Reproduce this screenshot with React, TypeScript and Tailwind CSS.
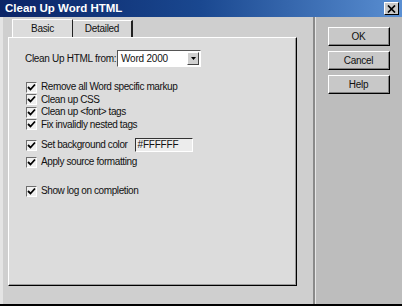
import React from 'react';

const font = { fontFamily: '"Liberation Sans", Arial, sans-serif' };

const Check: React.FC = () => (
  <span className="flex h-[11px] w-[11px] shrink-0 items-center justify-center border border-t-[#6e6e6e] border-l-[#6e6e6e] border-r-white border-b-white bg-[#f0f0f0]">
    <svg width="9" height="9" viewBox="0 0 9 9">
      <path d="M1 4 L3.5 6.5 L8 1.5" fill="none" stroke="#000" strokeWidth="1.8" />
    </svg>
  </span>
);

const Row: React.FC<{ label: string; className?: string; children?: React.ReactNode }> = ({ label, className, children }) => (
  <div className={`flex items-center ${className ?? 'h-[12.5px]'}`}>
    <Check />
    <span className="ml-[4px] whitespace-nowrap text-[10px] leading-none tracking-[-0.4px] text-[#111]">{label}</span>
    {children}
  </div>
);

const DlgButton: React.FC<{ label: string }> = ({ label }) => (
  <button className="flex h-[19px] w-[62px] items-center justify-center border border-t-white border-l-white border-r-black border-b-black bg-[#c8c8c8] text-[10px] leading-none tracking-[-0.3px] text-[#111] shadow-[inset_-1px_-1px_0_#808080]">
    {label}
  </button>
);

export default function App() {
  return (
    <div className="flex h-[306px] w-[402px] flex-col overflow-hidden border-b-2 border-black bg-[#c4c4c4]" style={font}>
      {/* Title bar */}
      <div className="flex h-[17px] shrink-0 items-center justify-between bg-gradient-to-r from-[#0b2466] via-[#1a4890] to-[#5a8fd2] pl-[5px] pr-[3px]">
        <span className="text-[11.5px] font-bold leading-none text-white">Clean Up Word HTML</span>
        <span className="flex h-[13px] w-[15px] items-center justify-center border border-t-white border-l-white border-r-black border-b-black bg-[#c8c8c8]">
          <svg width="9" height="8" viewBox="0 0 9 8">
            <path d="M1 0.5 L8 7.5 M8 0.5 L1 7.5" stroke="#000" strokeWidth="1.7" />
          </svg>
        </span>
      </div>

      <div className="flex flex-1">
        {/* Left: tabs + panel */}
        <div className="flex w-[313px] flex-col border-l-[3px] border-l-[#e4e4e4] bg-[#cfcfcf] pl-[5px] pt-[2px]">
          <div className="flex h-[18px] pl-[4px] text-[10px] leading-none tracking-[-0.3px] text-[#111]">
            <div className="flex w-[61px] items-center justify-center border-l border-t border-white border-r border-r-[#222] bg-[#dcdcdc]">
              Basic
            </div>
            <div className="mt-[1px] flex w-[60px] items-center justify-center border-t border-white border-r-2 border-r-[#222] bg-[#d6d6d6]">
              Detailed
            </div>
          </div>
          <div className="flex h-[249px] w-[289px] flex-col border border-t-white border-l-white border-r-black border-b-black bg-[#dcdcdc] pl-[16px] pt-[12px] shadow-[inset_-1px_-1px_0_#9a9a9a]">
            <div className="flex h-[17px] items-center">
              <span className="w-[92px] whitespace-nowrap text-[10px] leading-none tracking-[-0.3px] text-[#111]">Clean Up HTML from:</span>
              <div className="flex h-[17px] w-[84px] items-center justify-between border border-t-[#555] border-l-[#555] border-r-white border-b-white bg-white pl-[3px] pr-[1px]">
                <span className="text-[10px] leading-none tracking-[-0.2px] text-[#111]">Word 2000</span>
                <span className="flex h-[13px] w-[12px] items-center justify-center border border-t-white border-l-white border-r-[#444] border-b-[#444] bg-[#d0d0d0]">
                  <svg width="5" height="3" viewBox="0 0 5 3">
                    <path d="M0 0 H5 L2.5 3 Z" fill="#000" />
                  </svg>
                </span>
              </div>
            </div>

            <div className="mt-[14px] flex flex-col pl-[1px]">
              <Row label="Remove all Word specific markup" />
              <Row label="Clean up CSS" />
              <Row label="Clean up <font> tags" />
              <Row label="Fix invalidly nested tags" />
              <Row label="Set background color" className="mt-[7px] h-[14px]">
                <div className="ml-[7px] flex h-[14px] w-[58px] items-center border border-t-[#333] border-l-[#333] border-r-white border-b-white bg-[#ececec] pl-[2px] text-[10px] leading-none tracking-[-0.2px] text-[#111]">
                  #FFFFFF
                </div>
              </Row>
              <Row label="Apply source formatting" className="mt-[3.5px] h-[13px]" />
              <Row label="Show log on completion" className="mt-[16px] h-[13px]" />
            </div>
          </div>
        </div>

        {/* Right: buttons */}
        <div className="flex flex-1 flex-col items-center gap-[5px] border-l-2 border-l-[#8a8a8a] bg-[#bdbdbd] pt-[10px] shadow-[inset_1px_0_0_#e6e6e6]">
          <DlgButton label="OK" />
          <DlgButton label="Cancel" />
          <DlgButton label="Help" />
        </div>
      </div>
    </div>
  );
}
